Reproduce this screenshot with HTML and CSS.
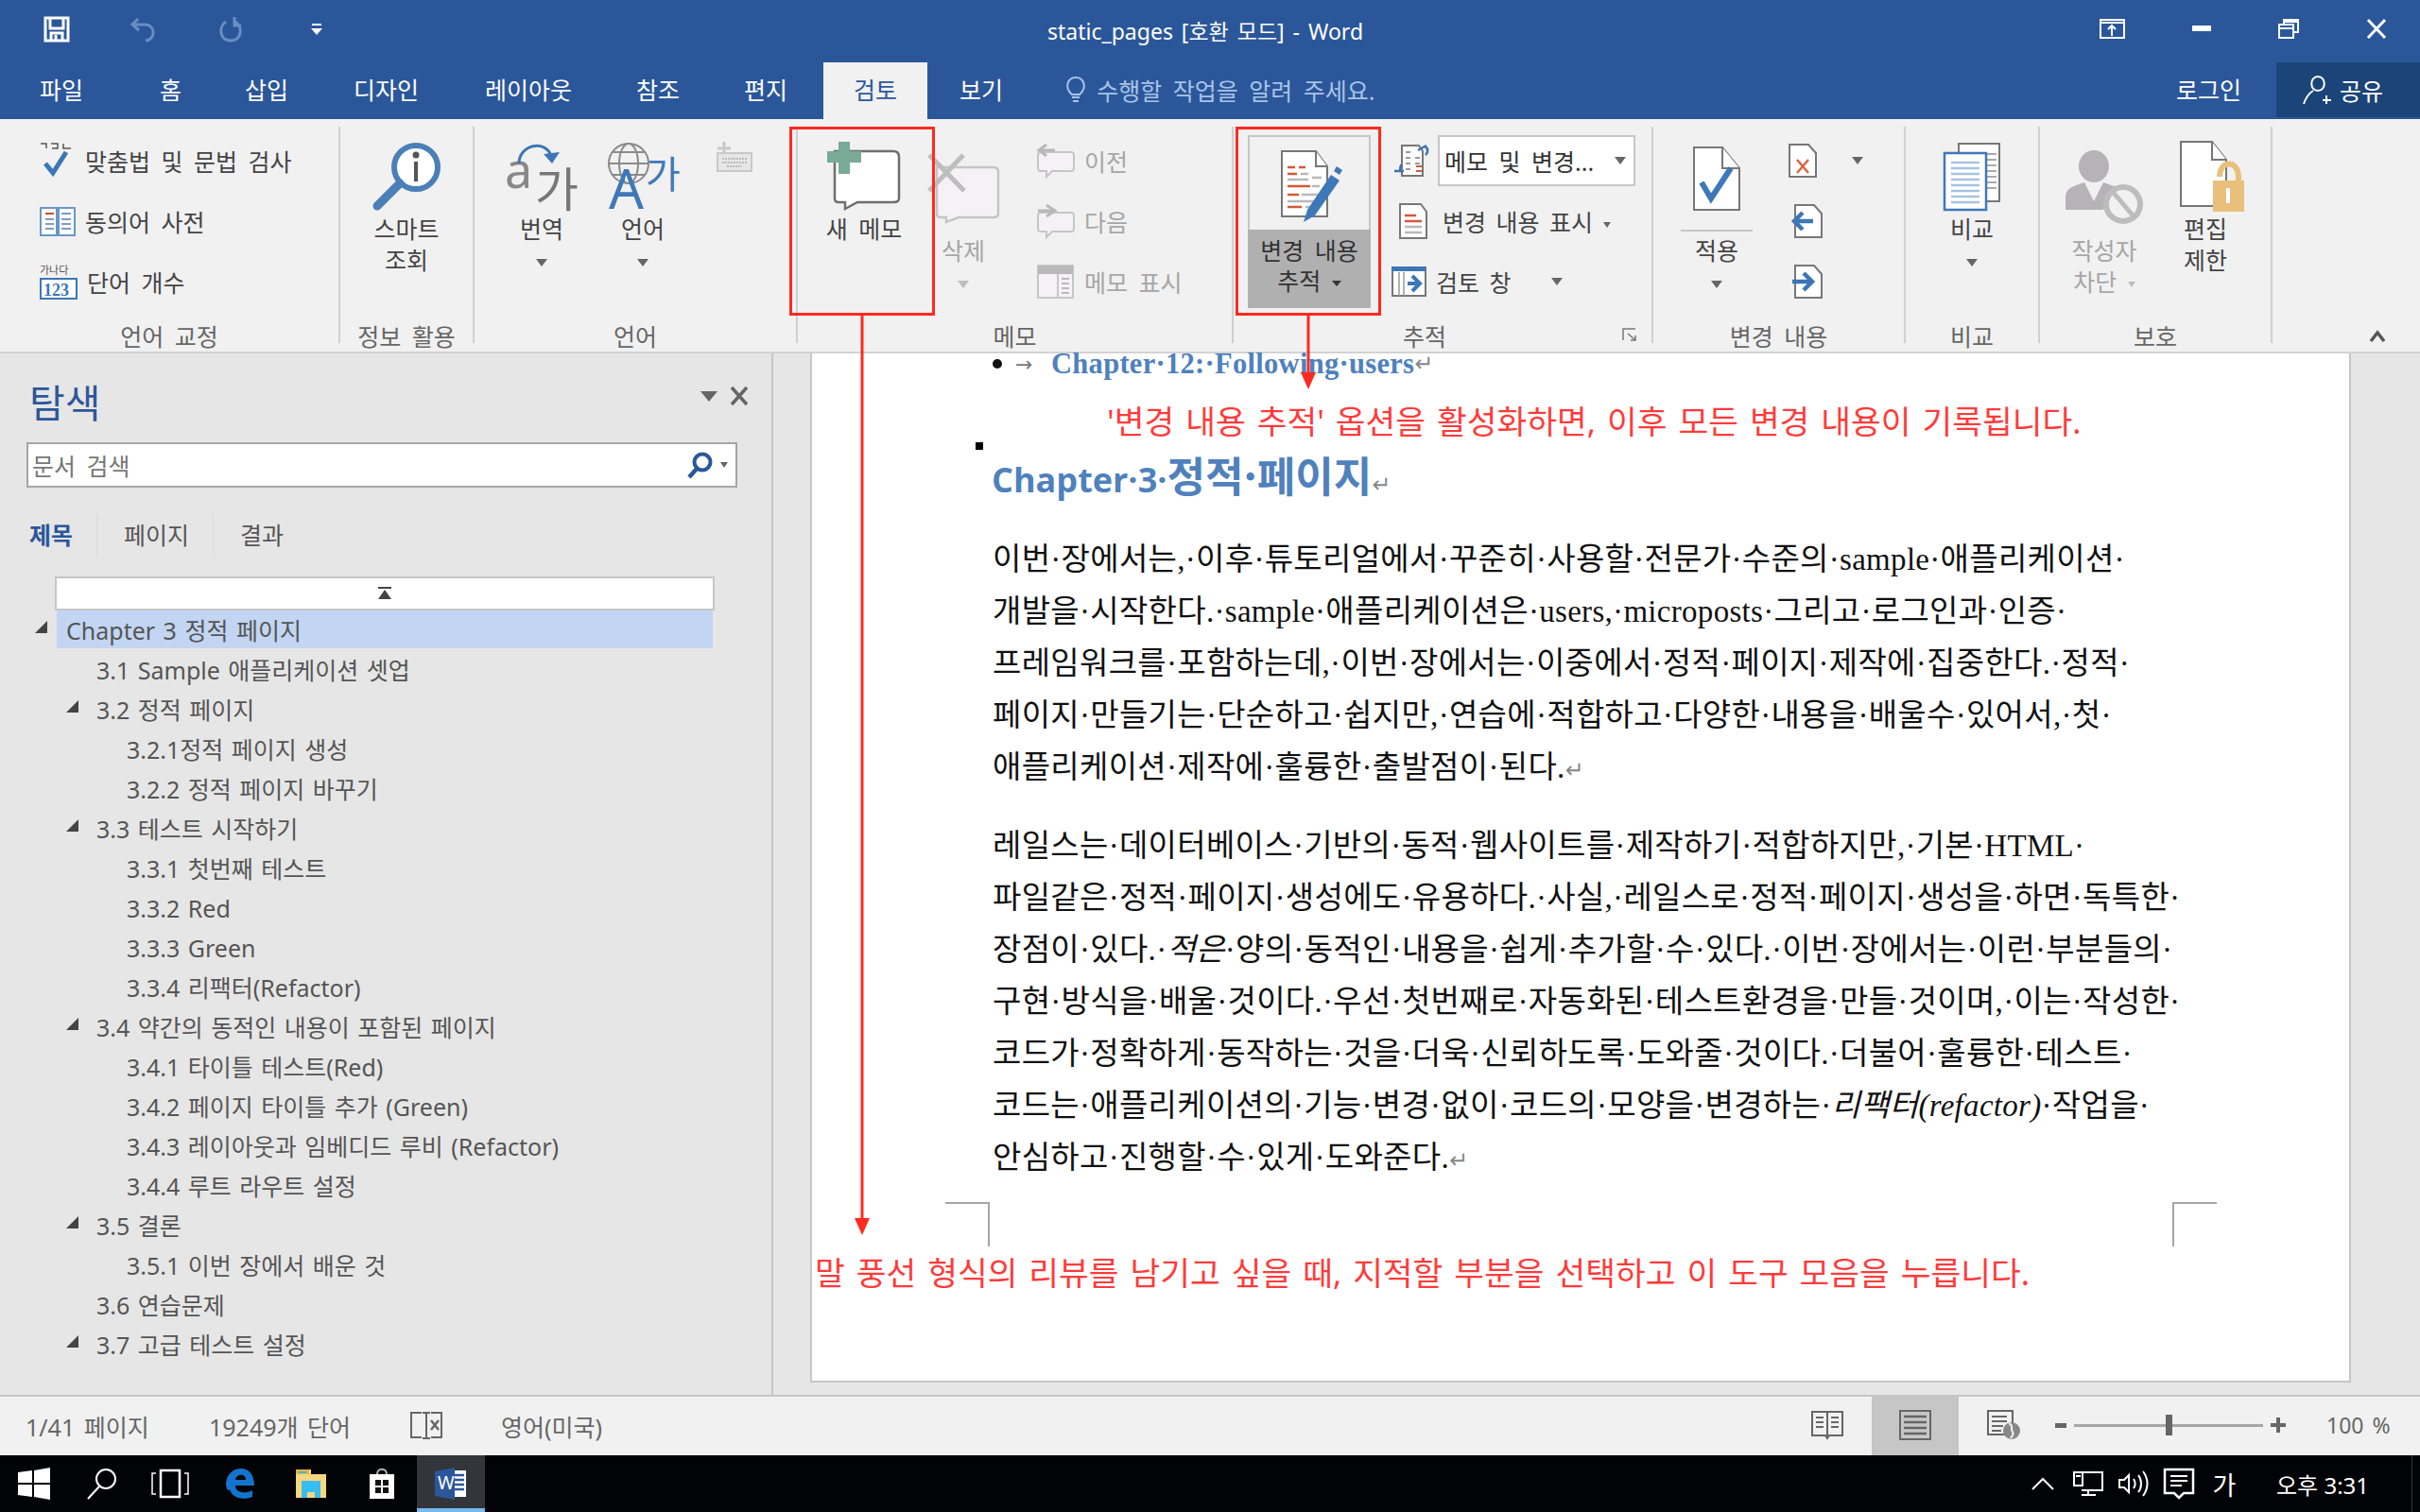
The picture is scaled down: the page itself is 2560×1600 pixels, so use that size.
FILE: index.html
```html
<!DOCTYPE html>
<html lang="ko">
<head>
    <meta charset="UTF-8">
    <title>static_pages [호환 모드] - Word</title>
    <link rel="stylesheet" href="styles.css">
</head>
<body>

    <header class="titlebar">
        <div class="qat">
            <svg width="28" height="28" viewBox="0 0 28 28"><path d="M2 2h24v24H2z M7 3v10h14V3 M8 26v-8h12v8 M13 20v6" fill="none" stroke="#fff" stroke-width="3"/></svg>
            <svg width="30" height="28" viewBox="0 0 30 28"><path d="M9 3L3 9l7 6 M4 9h12c12 0 12 16 1 17" fill="none" stroke="#6b8dc2" stroke-width="3"/></svg>
            <svg width="28" height="28" viewBox="0 0 28 28"><path d="M9 6C1 11 2 26 14 26c12 0 13-15 5-20 M18 1v9h7" fill="none" stroke="#6b8dc2" stroke-width="3"/></svg>
            <svg class="qat-more" width="12" height="14" viewBox="0 0 12 14"><path d="M1 1h10v2H1z M0 6h12L6 13z" fill="#fff"/></svg>
        </div>
        <div class="doc-title">static_pages [호환 모드] - Word</div>
        <div class="win-controls">
            <svg width="27" height="21" viewBox="0 0 27 21"><path d="M1 1h25v19H1z M1 4h25 M13 18V8 M9 11l4-4 4 4" fill="none" stroke="#fff" stroke-width="2"/></svg>
            <svg width="20" height="6" viewBox="0 0 20 6"><path d="M0 0h20v6H0z" fill="#fff"/></svg>
            <svg width="22" height="21" viewBox="0 0 22 21"><path d="M6 5V1h15v13h-5 M1 6h15v14H1z M1 10h15 M6 3h15" fill="none" stroke="#fff" stroke-width="2"/></svg>
            <svg width="22" height="21" viewBox="0 0 22 21"><path d="M2 1l18 19 M20 1L2 20" fill="none" stroke="#fff" stroke-width="3"/></svg>
        </div>
    </header>

    <nav class="tabs">
        <a class="tab tab-file">파일</a>
        <a class="tab tab-home">홈</a>
        <a class="tab tab-insert">삽입</a>
        <a class="tab tab-design">디자인</a>
        <a class="tab tab-layout">레이아웃</a>
        <a class="tab tab-refs">참조</a>
        <a class="tab tab-mail">편지</a>
        <a class="tab tab-review active">검토</a>
        <a class="tab tab-view">보기</a>
        <div class="tell-me">
            <svg width="20" height="28" viewBox="0 0 20 28"><path d="M6 19C-3 11 2 1 10 1s13 10 4 18z M6 22h8 M7 26h6" fill="none" stroke="#a9c3e8" stroke-width="2"/></svg>
            <span>수행할 작업을 알려 주세요.</span>
        </div>
        <a class="login">로그인</a>
        <div class="share">
            <svg width="30" height="32" viewBox="0 0 30 32"><path d="M16 2c-9 0-9 15 0 15s9-15 0-15z M11 17C6 20 3 25 1 31 M21 27h9 M25 22v9" fill="none" stroke="#fff" stroke-width="2"/></svg>
            <span>공유</span>
        </div>
    </nav>

    <section class="ribbon">
        <div class="group group-proof">
            <div class="group-body">
                <div class="rows">
                    <div class="row">
                        <svg width="38" height="38" viewBox="0 0 38 38"><path d="M1 1h6v5 M12 1h7v5h-6 M25 1v5h8" fill="none" stroke="#555" stroke-width="1.5"/><path d="M6 22l8 10L28 10" fill="none" stroke="#3c76b5" stroke-width="5"/></svg>
                        <span>맞춤법 및 문법 검사</span>
                    </div>
                    <div class="row">
                        <svg width="38" height="34" viewBox="0 0 38 34"><path d="M1 3h17v29H1z M20 3h17v29H20z" fill="#fff" stroke="#6a97c6" stroke-width="2"/><path d="M6 9h9" stroke="#d04a2a" stroke-width="2"/><path d="M6 15h9M6 20h9M6 25h9M23 9h10M23 15h10M23 20h10M23 25h10" stroke="#7c9cc4" stroke-width="2"/></svg>
                        <span>동의어 사전</span>
                    </div>
                    <div class="row">
                        <svg width="40" height="38" viewBox="0 0 40 38"><text x="0" y="11" class="svg-mini">가나다</text><path d="M1 16h38v21H1z" fill="#fff" stroke="#3c76b5" stroke-width="2"/><text x="4" y="34" class="svg-count">123</text></svg>
                        <span>단어 개수</span>
                    </div>
                </div>
            </div>
            <div class="group-label">언어 교정</div>
        </div>

        <div class="group group-insight">
            <div class="group-body">
                <div class="big">
                    <div class="slot">
                        <svg width="76" height="74" viewBox="0 0 76 74"><circle cx="48" cy="27" r="23" fill="#fff" stroke="#4a7fb8" stroke-width="6"/><path d="M31 44L7 68" stroke="#4a7fb8" stroke-width="9" stroke-linecap="round"/><circle cx="48" cy="14" r="3.5" fill="#555"/><path d="M48 21v21" stroke="#555" stroke-width="4"/></svg>
                    </div>
                    <div class="big-label">스마트<br>조회</div>
                </div>
            </div>
            <div class="group-label">정보 활용</div>
        </div>

        <div class="group group-lang">
            <div class="group-body">
                <div class="big btn-translate">
                    <div class="slot">
                        <svg width="80" height="76" viewBox="0 0 80 76"><text x="1" y="50" class="svg-a">a</text><text x="33" y="70" class="svg-ga">가</text><path d="M16 24C16 4 44 -2 50 16" fill="none" stroke="#3c76b5" stroke-width="3"/><path d="M42 14l9 10 8-12z" fill="#3c76b5"/></svg>
                    </div>
                    <div class="big-label">번역<br><i class="caret"></i></div>
                </div>
                <div class="big btn-language">
                    <div class="slot">
                        <svg width="78" height="76" viewBox="0 0 78 76"><g fill="none" stroke="#8a8a8a" stroke-width="2"><circle cx="24" cy="24" r="21"/><ellipse cx="24" cy="24" rx="10" ry="21"/><path d="M3 24h42M7 12h34M7 36h34"/></g><text x="3" y="72" class="svg-big-a">A</text><text x="42" y="50" class="svg-ga-blue">가</text></svg>
                    </div>
                    <div class="big-label">언어<br><i class="caret"></i></div>
                </div>
                <svg class="kbd-icon" width="38" height="32" viewBox="0 0 38 32"><path d="M8 0v14M1 7h14" stroke="#c9c9c9" stroke-width="3"/><path d="M1 12h36v19H1z" fill="#e6e6e6" stroke="#c9c9c9" stroke-width="2"/><path d="M6 18h26M6 22h26M11 26h16" stroke="#bbb" stroke-width="2" stroke-dasharray="2 1"/></svg>
            </div>
            <div class="group-label">언어</div>
        </div>

        <div class="group group-comment">
            <div class="group-body">
                <div class="big btn-new">
                    <div class="slot">
                        <svg width="78" height="74" viewBox="0 0 78 74"><path d="M8 11h62q6 0 6 6v44q0 4-6 4H32L19 72V65H12q-4 0-4-4z" transform="translate(0,-1)" fill="#fff" stroke="#6e6e6e" stroke-width="2.5"/><path d="M0 10h12V0h12v10h12v12H24v12H12V22H0z" fill="#79a997"/></svg>
                    </div>
                    <div class="big-label">새 메모</div>
                </div>
                <div class="big tall btn-delete disabled">
                    <div class="slot">
                        <svg width="76" height="74" viewBox="0 0 76 74"><path d="M10 15h60q5 0 5 5v44q0 4-5 4H33L20 73V68h-6q-4 0-4-4z" fill="#f5f2f6" stroke="#c6c6c6" stroke-width="2.5"/><path d="M2 2l37 38M38 2L2 40" stroke="#bdbdbd" stroke-width="5"/></svg>
                    </div>
                    <div class="big-label">삭제<br><i class="caret"></i></div>
                </div>
                <div class="rows rows-comment disabled">
                    <div class="row">
                        <svg width="40" height="36" viewBox="0 0 40 36"><path d="M4 9h32q3 0 3 3v14q0 3-3 3H16l-6 6v-6H4q-3 0-3-3V12q0-3 3-3z" fill="#f5f2f6" stroke="#c6c6c6" stroke-width="2"/><path d="M10 1L2 7l8 6M2 7h17" fill="none" stroke="#b8b8b8" stroke-width="3"/></svg>
                        <span>이전</span>
                    </div>
                    <div class="row">
                        <svg width="40" height="36" viewBox="0 0 40 36"><path d="M4 9h32q3 0 3 3v14q0 3-3 3H16l-6 6v-6H4q-3 0-3-3V12q0-3 3-3z" fill="#f5f2f6" stroke="#c6c6c6" stroke-width="2"/><path d="M10 1l9 6-9 6M1 7h18" fill="none" stroke="#b8b8b8" stroke-width="3"/></svg>
                        <span>다음</span>
                    </div>
                    <div class="row">
                        <svg width="40" height="36" viewBox="0 0 40 36"><path d="M1 1h37v34H1z" fill="#f5f2f6" stroke="#c6c6c6" stroke-width="2"/><path d="M1 1h37v9H1z" fill="#b9b9b9"/><path d="M22 10v25" stroke="#c6c6c6" stroke-width="2"/><path d="M26 15h8M26 20h8M26 25h8M26 30h8" stroke="#b9b9b9" stroke-width="2"/></svg>
                        <span>메모 표시</span>
                    </div>
                </div>
            </div>
            <div class="group-label">메모</div>
        </div>

        <div class="group group-track">
            <div class="group-body">
                <div class="track-btn">
                    <div class="track-top">
                        <svg width="66" height="76" viewBox="0 0 66 76"><path d="M1 1h36l12 16v53H1z" fill="#fff" stroke="#777" stroke-width="2"/><path d="M37 1v16h12" fill="#fff" stroke="#777" stroke-width="2"/><path d="M7 18h8M19 18h7M7 25h10M7 38h24M7 47h12M7 60h15" stroke="#d5593a" stroke-width="2.5"/><path d="M21 25h8M33 29h10M7 31h22M33 38h8M22 47h18M7 54h28M26 60h8" stroke="#b9b9b9" stroke-width="2.5"/><path d="M24 76l4-13 25-37 9 6-26 37z" fill="#3f78b8"/><path d="M56 22l6 4 3-5-6-4z" fill="#3f78b8"/></svg>
                    </div>
                    <div class="track-label">변경 내용<br>추적 <i class="caret dark"></i></div>
                </div>
                <div class="rows rows-track">
                    <div class="row">
                        <svg width="49" height="36" viewBox="0 0 49 36"><path d="M11 2h18l4 6v26H11z" fill="#fff" stroke="#777" stroke-width="2"/><path d="M15 9h5M15 15h5M15 21h5M15 27h5M25 15h5M25 21h5" stroke="#9a9a9a" stroke-width="2"/><path d="M26 24h6M26 29h6" stroke="#d5593a" stroke-width="2"/><path d="M28 7l9-5M36 12c3-3 3-6 0-9M11 30c-3-2-2-6 0-8M3 29h10" fill="none" stroke="#3c76b5" stroke-width="2.5"/></svg>
                        <div class="dropdown"><span>메모 및 변경...</span><i class="caret"></i></div>
                    </div>
                    <div class="row">
                        <svg width="54" height="38" viewBox="0 0 54 38"><path d="M9 1h22l6 8v28H9z" fill="#fff" stroke="#777" stroke-width="2"/><path d="M14 13h12M14 19h18" stroke="#d5593a" stroke-width="2.5"/><path d="M14 25h18M14 31h18" stroke="#b9b9b9" stroke-width="2.5"/></svg>
                        <span>변경 내용 표시 <i class="caret small"></i></span>
                    </div>
                    <div class="row">
                        <svg width="47" height="32" viewBox="0 0 47 32"><path d="M1 1h35v30H1z" fill="#fff" stroke="#777" stroke-width="2"/><path d="M0 0h36v5H0z" fill="#3c76b5"/><path d="M8 6v25M13 6v25" stroke="#999" stroke-width="1.5"/><path d="M17 18h10M22 10l8 8-8 8" fill="none" stroke="#3c76b5" stroke-width="4"/></svg>
                        <span>검토 창</span>
                        <i class="caret review-caret"></i>
                    </div>
                </div>
            </div>
            <div class="group-label">추적</div>
            <svg class="launcher" width="15" height="14" viewBox="0 0 15 14"><path d="M1 13V1h13 M6 6l8 7M14 8v5H9" fill="none" stroke="#777" stroke-width="1.5"/></svg>
        </div>

        <div class="group group-changes">
            <div class="group-body">
                <div class="big tall btn-accept">
                    <div class="slot slot-line">
                        <svg width="50" height="68" viewBox="0 0 50 68"><path d="M1 1h30l18 22v44H1z" fill="#fff" stroke="#777" stroke-width="2"/><path d="M31 1v22h18" fill="#fff" stroke="#777" stroke-width="2"/><path d="M9 38l10 17 21-32" fill="none" stroke="#3f78b8" stroke-width="6"/></svg>
                    </div>
                    <div class="big-label">적용<br><i class="caret"></i></div>
                </div>
                <div class="rows rows-changes">
                    <div class="row">
                        <svg width="30" height="36" viewBox="0 0 30 36"><path d="M1 1h20l8 9v25H1z" fill="#fff" stroke="#777" stroke-width="2"/><path d="M9 17l12 14M21 17L9 31" stroke="#e0623e" stroke-width="2.5"/></svg>
                        <i class="caret reject-caret"></i>
                    </div>
                    <div class="row">
                        <svg class="shift" width="32" height="36" viewBox="0 0 32 36"><path d="M3 1h20l8 9v25H3z" fill="#fff" stroke="#777" stroke-width="2"/><path d="M2 18h20M11 9l-9 9 9 9" fill="none" stroke="#3c76b5" stroke-width="4.5"/></svg>
                    </div>
                    <div class="row">
                        <svg class="shift" width="32" height="36" viewBox="0 0 32 36"><path d="M3 1h20l8 9v25H3z" fill="#fff" stroke="#777" stroke-width="2"/><path d="M0 18h20M12 9l9 9-9 9" fill="none" stroke="#3c76b5" stroke-width="4.5"/></svg>
                    </div>
                </div>
            </div>
            <div class="group-label">변경 내용</div>
        </div>

        <div class="group group-compare">
            <div class="group-body">
                <div class="big">
                    <div class="slot">
                        <svg width="60" height="72" viewBox="0 0 60 72"><path d="M16 1h43v61H16z" fill="#fff" stroke="#777" stroke-width="2"/><path d="M46 12h10M46 18h10M46 24h10M46 30h10M46 36h10M46 42h10M46 48h10" stroke="#aaa" stroke-width="2"/><path d="M1 11h44v60H1z" fill="#fff" stroke="#3f78b8" stroke-width="2.5"/><path d="M8 21h30M8 27h30M8 33h30M8 39h30M8 45h30M8 51h30M8 57h30M8 63h30" stroke="#a8c3e0" stroke-width="2.5"/></svg>
                    </div>
                    <div class="big-label">비교<br><i class="caret"></i></div>
                </div>
            </div>
            <div class="group-label">비교</div>
        </div>

        <div class="group group-protect">
            <div class="group-body">
                <div class="big tall btn-block disabled">
                    <div class="slot">
                        <svg width="82" height="80" viewBox="0 0 82 80"><ellipse cx="30" cy="17" rx="16" ry="17" fill="#b5b3b6"/><path d="M0 63V50c0-10 8-12 20-16l10 20 10-20 14 5-14 24z" fill="#b5b3b6"/><circle cx="61" cy="57" r="18" fill="#f1f1f1" stroke="#bdbdbd" stroke-width="6"/><path d="M50 44l22 26" stroke="#bdbdbd" stroke-width="5"/></svg>
                    </div>
                    <div class="big-label">작성자<br>차단 <i class="caret small"></i></div>
                </div>
                <div class="big btn-restrict">
                    <div class="slot">
                        <svg width="68" height="76" viewBox="0 0 68 76"><path d="M1 1h33l15 19v49H1z" fill="#fff" stroke="#777" stroke-width="2"/><path d="M34 1v19h15" fill="#fff" stroke="#777" stroke-width="2"/><path d="M42 38c0-18 20-18 20 0v8" fill="none" stroke="#e8c07c" stroke-width="6"/><path d="M35 42h33v33H35z" fill="#e8c07c"/><path d="M51 50v16" stroke="#fff" stroke-width="4"/></svg>
                    </div>
                    <div class="big-label">편집<br>제한</div>
                </div>
            </div>
            <div class="group-label">보호</div>
        </div>

        <div class="collapse">
            <svg width="18" height="14" viewBox="0 0 18 14"><path d="M2 12l7-9 7 9" fill="none" stroke="#555" stroke-width="3.5"/></svg>
        </div>
    </section>

    <main class="workspace">
        <aside class="nav-pane">
            <div class="nav-head">
                <h1>탐색</h1>
                <i class="caret nav-caret"></i>
                <svg width="20" height="20" viewBox="0 0 20 20"><path d="M2 1l16 18M18 1L2 19" stroke="#666" stroke-width="3.5"/></svg>
            </div>
            <div class="search">
                <span>문서 검색</span>
                <svg width="28" height="28" viewBox="0 0 28 28"><circle cx="17" cy="11" r="8.5" fill="none" stroke="#2b579a" stroke-width="4"/><path d="M11 18L3 27" stroke="#2b579a" stroke-width="4.5"/></svg>
                <i class="caret small"></i>
            </div>
            <div class="nav-tabs">
                <a class="nav-tab on">제목</a>
                <a class="nav-tab">페이지</a>
                <a class="nav-tab">결과</a>
            </div>
            <div class="tree">
                <div class="tree-top"><svg width="16" height="14" viewBox="0 0 16 14"><path d="M1 0h14v2H1zM8 3l7 10H1z" fill="#444"/></svg></div>
                <div class="node l1 open sel">Chapter 3 정적 페이지</div>
                <div class="node l2">3.1 Sample 애플리케이션 셋업</div>
                <div class="node l2 open">3.2 정적 페이지</div>
                <div class="node l3">3.2.1정적 페이지 생성</div>
                <div class="node l3">3.2.2 정적 페이지 바꾸기</div>
                <div class="node l2 open">3.3 테스트 시작하기</div>
                <div class="node l3">3.3.1 첫번째 테스트</div>
                <div class="node l3">3.3.2 Red</div>
                <div class="node l3">3.3.3 Green</div>
                <div class="node l3">3.3.4 리팩터(Refactor)</div>
                <div class="node l2 open">3.4 약간의 동적인 내용이 포함된 페이지</div>
                <div class="node l3">3.4.1 타이틀 테스트(Red)</div>
                <div class="node l3">3.4.2 페이지 타이틀 추가 (Green)</div>
                <div class="node l3">3.4.3 레이아웃과 임베디드 루비 (Refactor)</div>
                <div class="node l3">3.4.4 루트 라우트 설정</div>
                <div class="node l2 open">3.5 결론</div>
                <div class="node l3">3.5.1 이번 장에서 배운 것</div>
                <div class="node l2">3.6 연습문제</div>
                <div class="node l2 open">3.7 고급 테스트 설정</div>
            </div>
        </aside>

        <div class="doc-area">
            <article class="page">
                <div class="bullet"><i class="dot"></i><span class="tab-arrow">→</span><span class="bullet-text">Chapter·12:·Following·users</span><span class="mark">↵</span></div>
                <h2><span class="h-latin">Chapter·3·</span>정적·페이지<span class="mark">↵</span></h2>
                <p>이번·장에서는,·이후·튜토리얼에서·꾸준히·사용할·전문가·수준의·sample·애플리케이션·<br>
                개발을·시작한다.·sample·애플리케이션은·users,·microposts·그리고·로그인과·인증·<br>
                프레임워크를·포함하는데,·이번·장에서는·이중에서·정적·페이지·제작에·집중한다.·정적·<br>
                페이지·만들기는·단순하고·쉽지만,·연습에·적합하고·다양한·내용을·배울수·있어서,·첫·<br>
                애플리케이션·제작에·훌륭한·출발점이·된다.<span class="mark">↵</span></p>
                <p>레일스는·데이터베이스·기반의·동적·웹사이트를·제작하기·적합하지만,·기본·HTML·<br>
                파일같은·정적·페이지·생성에도·유용하다.·사실,·레일스로·정적·페이지·생성을·하면·독특한·<br>
                장점이·있다.·<em>적은</em>·양의·동적인·내용을·쉽게·추가할·수·있다.·이번·장에서는·이런·부분들의·<br>
                구현·방식을·배울·것이다.·우선·첫번째로·자동화된·테스트환경을·만들·것이며,·이는·작성한·<br>
                코드가·정확하게·동작하는·것을·더욱·신뢰하도록·도와줄·것이다.·더불어·훌륭한·테스트·<br>
                코드는·애플리케이션의·기능·변경·없이·코드의·모양을·변경하는·<em>리팩터(refactor)</em>·작업을·<br>
                안심하고·진행할·수·있게·도와준다.<span class="mark">↵</span></p>
                <i class="crop crop-left"></i>
                <i class="crop crop-right"></i>
            </article>
        </div>
    </main>

    <footer class="statusbar">
        <span class="st-pages">1/41 페이지</span>
        <span class="st-words">19249개 단어</span>
        <svg class="st-proof" width="34" height="30" viewBox="0 0 34 30"><path d="M12 1H1v26h11M22 1h11v26H22M17 1v28M13 1h8M13 28h8" fill="none" stroke="#666" stroke-width="2"/><path d="M22 9l8 10M30 9l-8 10" stroke="#666" stroke-width="2.5"/></svg>
        <span>영어(미국)</span>
        <div class="st-right">
            <svg width="34" height="30" viewBox="0 0 34 30"><path d="M1 1h32v25H19l-2 3-2-3H1z M17 1v28" fill="none" stroke="#666" stroke-width="2"/><path d="M5 7h8M5 12h8M5 17h8M21 7h8M21 12h8M21 17h8" stroke="#666" stroke-width="2"/></svg>
            <div class="view-on">
                <svg width="34" height="32" viewBox="0 0 34 32"><path d="M1 1h32v30H1z" fill="none" stroke="#666" stroke-width="2"/><path d="M5 7h24M5 13h24M5 19h24M5 25h24" stroke="#666" stroke-width="2.5"/></svg>
            </div>
            <svg class="view-web" width="36" height="32" viewBox="0 0 36 32"><path d="M1 1h26v25H1z" fill="none" stroke="#666" stroke-width="2"/><path d="M5 7h16M5 12h16M5 17h12M5 22h10" stroke="#666" stroke-width="2"/><circle cx="26" cy="22" r="9" fill="#888"/><path d="M23 14c6 3 1 6 4 9 2 3-1 5-2 7" stroke="#f1f1f1" stroke-width="2" fill="none"/></svg>
            <div class="zoom-ctl">
                <span class="z-minus"></span>
                <div class="z-track"><span class="z-thumb"></span></div>
                <span class="z-plus"></span>
            </div>
            <span class="z-pct">100 %</span>
        </div>
    </footer>

    <div class="taskbar">
        <div class="tb-slot">
            <svg width="34" height="34" viewBox="0 0 34 34"><path d="M0 5l15-2v13H0zM17 3l17-3v16H17zM0 18h15v13L0 29zM17 18h17v16l-17-3z" fill="#fff"/></svg>
        </div>
        <div class="tb-slot">
            <svg width="34" height="34" viewBox="0 0 34 34"><circle cx="21" cy="12" r="10" fill="none" stroke="#fff" stroke-width="2"/><path d="M14 20L2 33" stroke="#fff" stroke-width="2"/></svg>
        </div>
        <div class="tb-slot">
            <svg width="40" height="30" viewBox="0 0 40 30"><path d="M10 1h20v28H10z" fill="none" stroke="#fff" stroke-width="2.5"/><path d="M5 4H1v22h4M35 4h4v22h-4" fill="none" stroke="#fff" stroke-width="1.5"/></svg>
        </div>
        <div class="tb-slot tb-wide">
            <svg width="30" height="32" viewBox="0 0 30 32"><path d="M0 17C0 6 8 0 16 0c8 0 14 6 14 18H10c0 8 11 9 18 5v7c-10 4-22 1-24-8-2 3-3 0-4-5zM10 12h11c0-7-10-7-11 0z" fill="#1374ce"/></svg>
        </div>
        <div class="tb-slot tb-wide">
            <svg width="32" height="30" viewBox="0 0 32 30"><path d="M0 0h16v5h16v25H0z" fill="#f5d77e"/><path d="M0 0h14v5H0z" fill="#e8b53a"/><path d="M3 2h8v2H3z" fill="#3ab6f0"/><path d="M6 12h20v18h-6v-6h-8v6H6z" fill="#38bdf2"/></svg>
        </div>
        <div class="tb-slot tb-wide">
            <svg width="28" height="32" viewBox="0 0 28 32"><path d="M1 6h26v26H1z" fill="#fff"/><path d="M9 6c0-7 10-7 10 0" fill="none" stroke="#bbb" stroke-width="2"/><path d="M7 12h6v6H7zM15 12h6v6h-6zM7 20h6v6H7zM15 20h6v6h-6z" fill="#111"/></svg>
        </div>
        <div class="tb-slot tb-word">
            <svg width="34" height="34" viewBox="0 0 34 34"><path d="M19 3h14v28H19z" fill="#fff"/><path d="M21 8h10M21 13h10M21 18h10M21 23h10" stroke="#2b579a" stroke-width="2.5"/><path d="M0 4l21-4v34L0 30z" fill="#2b579a"/><text x="3" y="23" class="svg-w">W</text></svg>
        </div>
        <div class="tray">
            <div class="tray-slot"><svg width="24" height="14" viewBox="0 0 24 14"><path d="M1 13L12 2l11 11" fill="none" stroke="#fff" stroke-width="2"/></svg></div>
            <div class="tray-slot"><svg width="32" height="26" viewBox="0 0 32 26"><path d="M9 1h22v19H9M1 1h9v14H1zM3 5h5M16 20v5M9 25h15" fill="none" stroke="#fff" stroke-width="2"/></svg></div>
            <div class="tray-slot"><svg width="32" height="28" viewBox="0 0 32 28"><path d="M1 10h5l5-5v18l-5-5H1z" fill="none" stroke="#fff" stroke-width="2"/><path d="M16 9c2 3 2 7 0 10M21 5c4 5 4 13 0 18M26 1c6 8 6 18 0 26" fill="none" stroke="#fff" stroke-width="2"/></svg></div>
            <div class="tray-slot"><svg width="32" height="32" viewBox="0 0 32 32"><path d="M1 1h30v25H21l-5 5-5-5H1z" fill="none" stroke="#fff" stroke-width="2.5"/><path d="M7 8h18M7 13h18M7 18h12" stroke="#fff" stroke-width="2"/></svg></div>
            <div class="tray-slot ime">가</div>
            <div class="clock">오후 3:31</div>
            <div class="show-desktop"></div>
        </div>
    </div>

    <svg class="callouts" width="2560" height="1600" viewBox="0 0 2560 1600">
        <g fill="none" stroke="#ff2a1f" stroke-width="3">
            <rect x="836.5" y="135.5" width="151" height="197"/>
            <rect x="1308.5" y="135.5" width="151" height="197"/>
            <path d="M912 333V1292M1384 333V396"/>
        </g>
        <path d="M904 1289h16l-8 18zM1376 394h16l-8 18z" fill="#ff2a1f"/>
    </svg>
    <div class="note note-track">'변경 내용 추적' 옵션을 활성화하면, 이후 모든 변경 내용이 기록됩니다.</div>
    <div class="note note-comment">말 풍선 형식의 리뷰를 남기고 싶을 때, 지적할 부분을 선택하고 이 도구 모음을 누릅니다.</div>

</body>
</html>
```

FILE: styles.css
```css
* {
    box-sizing: border-box;
}

body {
    position: relative;
    margin: 0;
    width: 2560px;
    height: 1600px;
    overflow: hidden;
    display: flex;
    flex-direction: column;
    background: #e6e6e6;
    color: #444;
    font-family: "Noto Sans", "Noto Sans CJK KR", sans-serif;
    font-size: 25px;
    word-spacing: 5px;
}

svg {
    display: block;
    flex: none;
    overflow: visible;
}

/* title bar */
.titlebar {
    height: 66px;
    background: #2b579a;
    color: #fff;
    display: flex;
    align-items: center;
    justify-content: space-between;
    position: relative;
}

.qat {
    display: flex;
    align-items: center;
    gap: 63px;
    padding-left: 46px;
    margin-top: -4px;
}

.qat-more {
    margin-left: 8px;
}

.doc-title {
    position: absolute;
    left: 1108px;
    top: 14px;
    font-size: 23px;
    line-height: 38px;
    word-spacing: 3px;
    white-space: nowrap;
}

.win-controls {
    display: flex;
    align-items: center;
    gap: 71px;
    padding-right: 35px;
    margin-top: -6px;
}

/* tabs */
.tabs {
    height: 60px;
    background: #2b579a;
    color: #fff;
    display: flex;
    align-items: stretch;
}

.tab {
    line-height: 58px;
    text-align: center;
    flex: none;
}

.tab-file { margin-left: 42px; }
.tab-home { margin-left: 81px; }
.tab-insert { margin-left: 67px; }
.tab-design { margin-left: 69px; }
.tab-layout { margin-left: 70px; }
.tab-refs { margin-left: 68px; }
.tab-mail { margin-left: 68px; }
.tab-review { margin-left: 38px; width: 110px; }
.tab-view { margin-left: 34px; }

.tab.active {
    background: #f1f1f1;
    color: #2b579a;
}

.tell-me {
    display: flex;
    align-items: center;
    gap: 12px;
    margin-left: 67px;
    color: #a9c3e8;
    padding-bottom: 2px;
}

.login {
    margin-left: auto;
    line-height: 58px;
}

.share {
    margin-left: 37px;
    width: 152px;
    height: 58px;
    background: #1b4478;
    display: flex;
    align-items: center;
    gap: 9px;
    padding-left: 28px;
}

/* ribbon */
.ribbon {
    height: 248px;
    background: #f1f1f1;
    border-bottom: 2px solid #d2d2d2;
    display: flex;
    flex: none;
    padding-top: 8px;
}

.group {
    position: relative;
    height: 229px;
    border-right: 2px solid #d0d0d0;
    display: flex;
    flex-direction: column;
    flex: none;
}

.group-proof { width: 360px; padding-left: 42px; }
.group-insight { width: 142px; }
.group-lang { width: 342px; }
.group-comment { width: 461px; }
.group-track { width: 444px; }
.group-changes { width: 267px; }
.group-compare { width: 142px; }
.group-protect { width: 246px; }

.group-body {
    display: flex;
    height: 202px;
}

.group-insight .group-body,
.group-compare .group-body {
    justify-content: center;
}

.group-label {
    height: 27px;
    line-height: 40px;
    text-align: center;
    color: #666;
    white-space: nowrap;
}

.group-proof .group-label { margin-left: -42px; }
.group-track .group-label { padding-right: 38px; }

.rows {
    display: flex;
    flex-direction: column;
    padding-top: 4px;
}

.row {
    height: 64px;
    display: flex;
    align-items: center;
    gap: 10px;
    white-space: nowrap;
}

.big {
    display: flex;
    flex-direction: column;
    align-items: center;
    flex: none;
}

.slot {
    height: 92px;
    display: flex;
    align-items: center;
    justify-content: center;
    padding-top: 14px;
}

.tall .slot {
    height: 115px;
}

.big-label {
    line-height: 33px;
    text-align: center;
    white-space: nowrap;
}

.caret {
    display: inline-block;
    width: 0;
    height: 0;
    border-left: 6px solid transparent;
    border-right: 6px solid transparent;
    border-top: 8px solid #666;
    vertical-align: middle;
}

.caret.small {
    border-left-width: 4px;
    border-right-width: 4px;
    border-top-width: 6px;
}

.caret.dark {
    border-top-color: #333;
    border-left-width: 5px;
    border-right-width: 5px;
    border-top-width: 6px;
}

.disabled {
    color: #a6a6a6;
}

.disabled .caret {
    border-top-color: #bdbdbd;
}

.btn-translate { width: 106px; margin-left: 18px; }
.btn-language { width: 108px; }

.kbd-icon {
    margin: 16px 0 0 24px;
}

.btn-new { width: 140px; }
.btn-delete { width: 70px; }
.rows-comment { margin-left: 43px; }

.track-btn {
    width: 130px;
    height: 183px;
    margin: 9px 0 0 15px;
    flex: none;
    display: flex;
    flex-direction: column;
    border: 2px solid #c6c6c6;
    border-bottom: 0;
}

.track-top {
    height: 98px;
    display: flex;
    align-items: center;
    justify-content: center;
    padding-left: 6px;
    padding-top: 6px;
}

.track-label {
    flex: 1;
    background: #b0b0b0;
    margin: 0 -2px;
    padding-top: 6px;
    line-height: 32px;
    text-align: center;
    color: #333;
    white-space: nowrap;
}

.rows-track {
    margin-left: 22px;
}

.rows-track .row {
    gap: 0;
}

.rows-track .row:nth-child(2) span,
.rows-track .row:nth-child(3) span {
    word-spacing: 4px;
}

.dropdown {
    width: 209px;
    height: 54px;
    background: #fff;
    border: 2px solid #c6c6c6;
    display: flex;
    align-items: center;
    justify-content: space-between;
    padding: 0 8px 0 5px;
    color: #333;
}

.review-caret {
    margin-left: 42px;
}

.launcher {
    position: absolute;
    right: 16px;
    bottom: 2px;
}

.btn-accept {
    width: 76px;
    margin-left: 29px;
}

.slot-line {
    align-self: stretch;
    height: 111px !important;
    margin-bottom: 4px;
    border-bottom: 2px solid #c6c6c6;
    padding-top: 0;
}

.rows-changes {
    margin-left: 38px;
}

.reject-caret {
    margin-left: 27px;
}

.shift {
    margin-left: 4px;
}

.btn-block { width: 100px; margin-left: 18px; }
.btn-restrict { width: 114px; }
.btn-restrict svg { margin-left: 14px; }

.collapse {
    flex: 1;
    height: 229px;
    display: flex;
    justify-content: flex-end;
    align-items: flex-end;
    padding: 0 36px 0 0;
}

/* main area */
.workspace {
    flex: 1;
    min-height: 0;
    display: flex;
}

.nav-pane {
    width: 818px;
    flex: none;
    border-right: 2px solid #c6c6c6;
    background: #e6e6e6;
}

.nav-head {
    height: 94px;
    display: flex;
    align-items: center;
    padding: 0 0 4px 31px;
}

.nav-head h1 {
    margin: 10px 0 0;
    font-size: 41px;
    font-weight: 400;
    color: #2b579a;
}

.nav-caret {
    margin-left: auto;
    margin-right: 13px;
    border-left-width: 9px;
    border-right-width: 9px;
    border-top-width: 11px;
}

.nav-head svg {
    margin-right: 24px;
}

.search {
    width: 752px;
    height: 48px;
    margin-left: 28px;
    background: #fff;
    border: 2px solid #a6a6a6;
    display: flex;
    align-items: center;
    gap: 8px;
    padding: 0 8px 0 4px;
    color: #777;
}

.search span {
    flex: 1;
}

.nav-tabs {
    display: flex;
    height: 94px;
    padding: 6px 0 0 31px;
    align-items: center;
}

.nav-tab {
    line-height: 44px;
    padding-right: 25px;
    margin-right: 28px;
    border-right: 1px solid #dcdcdc;
    color: #555;
}

.nav-tab:last-child {
    border-right: 0;
}

.nav-tab.on {
    color: #2b579a;
    font-weight: 700;
}

.tree {
    margin-left: 58px;
    width: 698px;
}

.tree-top {
    height: 36px;
    background: #fff;
    border: 2px solid #c6c6c6;
    display: flex;
    align-items: center;
    justify-content: center;
}

.node {
    position: relative;
    height: 42px;
    line-height: 42px;
    color: #555;
    font-size: 25px;
    word-spacing: 2px;
    white-space: nowrap;
}

.l1 { padding-left: 12px; }
.l2 { padding-left: 44px; }
.l3 { padding-left: 76px; }

.sel {
    height: 40px;
    margin: 0 2px 2px;
    padding-left: 10px;
    background: #c2d5f2;
}

/* little expand triangle, sits in the indent */
.open::before {
    content: "";
    position: absolute;
    top: 11px;
    width: 0;
    height: 0;
    border-left: 13px solid transparent;
    border-bottom: 13px solid #444;
}

.l1.open::before { left: -23px; }
.l2.open::before { left: 12px; }

/* document */
.doc-area {
    flex: 1;
    min-width: 0;
    padding: 0 73px 13px 39px;
}

.page {
    display: flow-root;
    position: relative;
    height: 100%;
    background: #fff;
    border: 2px solid #c6c6c6;
    border-top: 0;
    padding-left: 191px;
    color: #111;
    font-family: "Liberation Serif", "Noto Sans CJK KR", serif;
    font-size: 33px;
    letter-spacing: 0.3px;
    word-spacing: 0;
    white-space: nowrap;
}

.bullet {
    display: flex;
    align-items: center;
    height: 30px;
    margin-top: -4px;
    font-size: 30.5px;
}

.dot {
    width: 10px;
    height: 10px;
    background: #111;
    border-radius: 50%;
}

.tab-arrow {
    margin-left: 14px;
    width: 38px;
    color: #777;
    font-family: "DejaVu Sans", sans-serif;
    font-size: 22px;
}

.bullet-text {
    color: #4f81bd;
    font-weight: 700;
}

.mark {
    color: #888;
    font-family: "DejaVu Sans", sans-serif;
    font-size: 24px;
    font-weight: 400;
}

h2 {
    position: relative;
    margin: 72px 0 33px -1px;
    height: 60px;
    line-height: 60px;
    color: #4f81bd;
    font-family: "Noto Sans CJK KR", sans-serif;
    font-size: 44px;
    font-weight: 700;
    letter-spacing: 0;
}

.h-latin {
    font-family: "Open Sans", sans-serif;
    font-size: 36px;
}

/* paragraph-mark square in the margin */
h2::before {
    content: "";
    position: absolute;
    left: -17px;
    top: -4px;
    width: 8px;
    height: 8px;
    background: #000;
}

p {
    margin: 0 0 25px;
    line-height: 55px;
}

.crop {
    position: absolute;
    top: 898px;
    width: 47px;
    height: 47px;
    border-top: 2px solid #a6a6a6;
}

.crop-left {
    left: 141px;
    border-right: 2px solid #a6a6a6;
}

.crop-right {
    left: 1439px;
    border-left: 2px solid #a6a6a6;
}

/* status bar */
.statusbar {
    height: 64px;
    flex: none;
    background: #f1f1f1;
    border-top: 2px solid #c6c6c6;
    display: flex;
    align-items: center;
    padding-left: 27px;
    color: #666;
    font-size: 25px;
    word-spacing: 3px;
}

.st-pages { width: 194px; }
.st-words { width: 213px; }
.st-proof { margin-right: 62px; }

.st-right {
    margin-left: auto;
    display: flex;
    align-items: center;
    align-self: stretch;
    margin-top: -2px;
}

.view-on {
    width: 92px;
    align-self: stretch;
    margin: 0 30px;
    background: #c6c6c6;
    display: flex;
    align-items: center;
    justify-content: center;
}

.zoom-ctl {
    display: flex;
    align-items: center;
    margin-left: 36px;
}

.z-minus {
    width: 12px;
    height: 5px;
    background: #666;
}

.z-track {
    width: 200px;
    height: 3px;
    margin: 0 8px;
    background: #a6a6a6;
    display: flex;
    justify-content: center;
    align-items: center;
}

.z-thumb {
    width: 7px;
    height: 22px;
    background: #666;
}

.z-plus {
    width: 16px;
    height: 16px;
    background: linear-gradient(#666, #666) center / 100% 4px no-repeat, linear-gradient(#666, #666) center / 4px 100% no-repeat;
}

.z-pct {
    width: 142px;
    padding-left: 43px;
    font-size: 23px;
}

/* taskbar */
.taskbar {
    height: 60px;
    flex: none;
    background: #020306;
    color: #fff;
    display: flex;
    align-items: stretch;
}

.tb-slot {
    width: 72px;
    display: flex;
    align-items: center;
    justify-content: center;
}

.tb-wide {
    width: 75px;
}

.tb-word {
    background: #33353a;
    border-bottom: 4px solid #76b9ed;
    padding-top: 4px;
}

.tray {
    margin-left: auto;
    display: flex;
    align-items: center;
}

.tray-slot {
    width: 48px;
    display: flex;
    justify-content: center;
}

.ime {
    font-size: 27px;
}

.clock {
    margin-left: 31px;
    width: 102px;
    font-size: 24px;
    word-spacing: 0;
    white-space: nowrap;
}

.show-desktop {
    width: 9px;
    margin-left: 41px;
    align-self: stretch;
    border-left: 1px solid #333;
}

/* svg text bits */
.svg-mini { font-size: 11px; fill: #555; word-spacing: 0; }
.svg-count { font-size: 18px; font-weight: 700; fill: #3c76b5; font-family: "Liberation Serif", serif; }
.svg-a { font-size: 52px; fill: #888; }
.svg-ga { font-size: 50px; fill: #777; }
.svg-big-a { font-size: 58px; fill: #3f78b8; }
.svg-ga-blue { font-size: 40px; fill: #3f78b8; }
.svg-w { font-size: 19px; fill: #fff; }

/* red annotations laid on top of the screenshot */
.callouts {
    position: absolute;
    left: 0;
    top: 0;
    pointer-events: none;
}

.note {
    position: absolute;
    color: #ff3b3b;
    font-size: 34.5px;
    word-spacing: 3px;
    line-height: 44px;
    white-space: nowrap;
}

.note-track {
    left: 1171px;
    top: 424px;
}

.note-comment {
    left: 862px;
    top: 1325px;
}
```
